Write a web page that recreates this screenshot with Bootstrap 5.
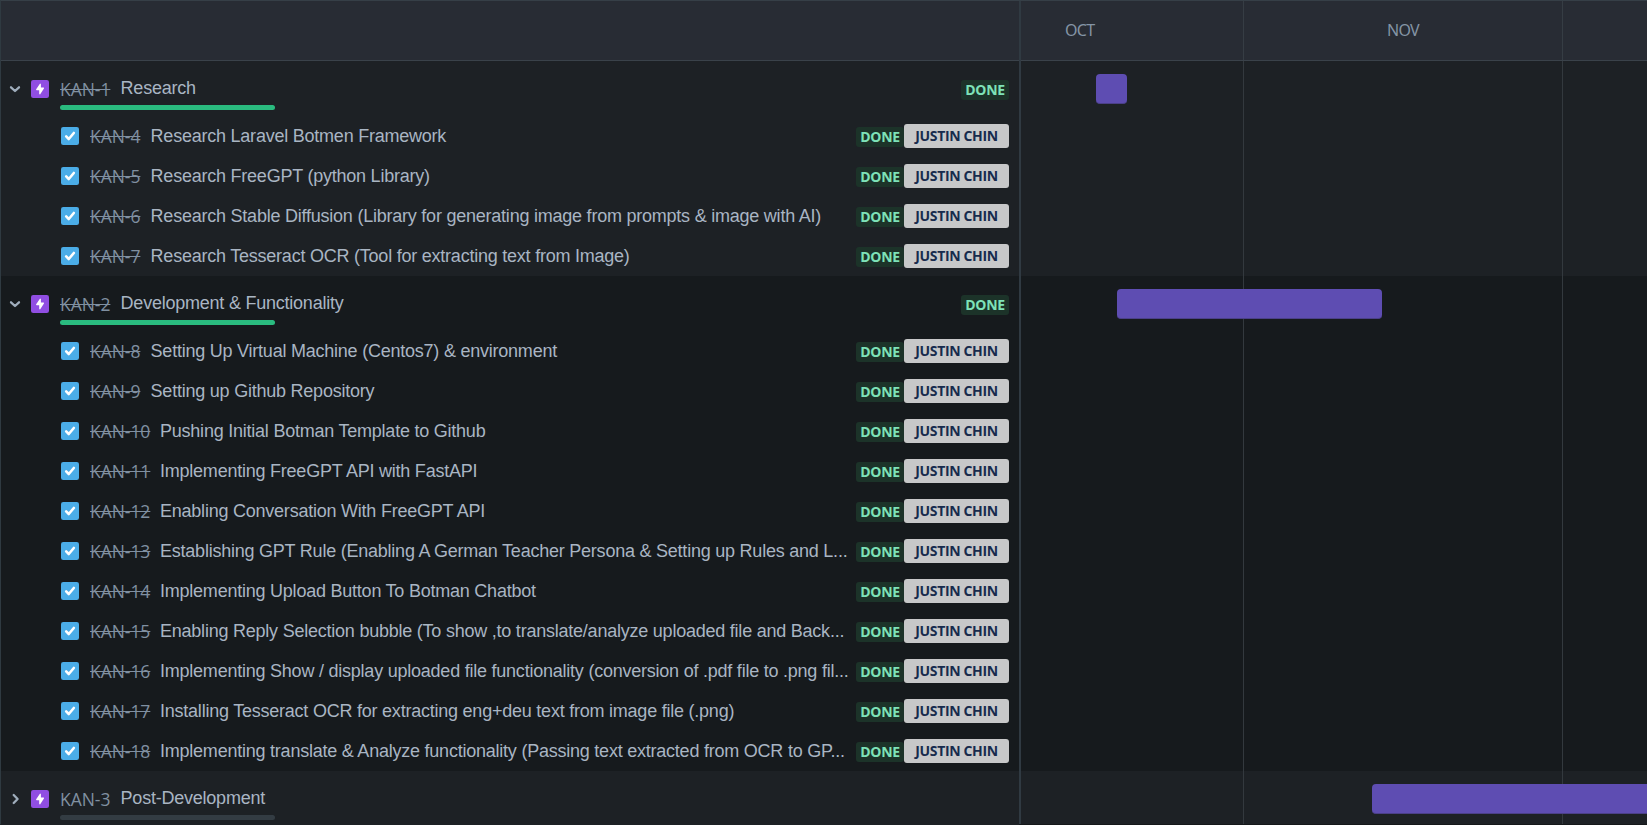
<!DOCTYPE html>
<html lang="en" data-bs-theme="dark">
<head>
<meta charset="utf-8">
<title>Timeline</title>
<meta name="viewport" content="width=device-width, initial-scale=1">
<link href="https://cdn.jsdelivr.net/npm/bootstrap@5.3.0/dist/css/bootstrap.min.css" rel="stylesheet">
<style>
  body { background: #1d2125; font-family: "Liberation Sans", Arial, sans-serif; height: 825px; overflow: hidden; }
  .timeline { height: 825px; border-left: 1px solid #2f3a41; border-top: 1px solid #363f47; border-bottom: 1px solid #15181a; }
  .issues { width: 1018px; flex: none; }
  .chart { border-left: 2px solid #303a42; }
  .head { height: 60px; background: #282c34; border-bottom: 1px solid #3a424a; flex: none; }
  .month { flex: none; height: 100%; font: 16px "Noto Sans", "Open Sans", sans-serif; color: #8494a5; border-right: 1px solid #363d44; letter-spacing: -.7px; padding-top: 18px; }
  .oct { width: 223px; } .nov { width: 319px; }
  .month.oct { padding-left: 44px; } .month.nov { padding-left: 143px; }
  .group-a { background: #1d2125; } .group-b { background: #161a1d; }
  .lane-1 { height: 215px; } .lane-2 { height: 495px; }
  .epic-row { height: 55px; position: relative; padding-left: 7px; padding-right: 10px; }
  .task-row { height: 40px; padding-left: 60px; padding-right: 10px; }
  .caret { width: 14px; height: 14px; margin-right: 9px; flex: none; }
  .kind { width: 18px; height: 18px; flex: none; }
  .issue-key { font: 17.5px "Open Sans", "Noto Sans", sans-serif; color: #8090a1; white-space: nowrap; flex: none; width: 50px; margin-left: 11px; letter-spacing: -.05px; }
  .issue-key.wide { width: 60px; }
  .struck { text-decoration: line-through; }
  .summary { font-size: 18px; color: #a9b5c3; white-space: nowrap; margin-left: 10.6px; letter-spacing: -.23px; }
  .issue-key.wide + .summary { margin-left: 10px; }
  .done { font: 700 14px/20px "Open Sans", "Noto Sans", sans-serif; height: 20px; width: 48px; text-align: center; color: #7ee2b8; background: #1c3329; border-radius: 3px; flex: none; letter-spacing: -.3px; position: relative; top: 1px; }
  .who { font: 700 14px/23px "Open Sans", "Noto Sans", sans-serif; height: 24px; width: 105px; text-align: center; color: #172b4d; background: #c7c8c9; border-radius: 3px; flex: none; letter-spacing: -.35px; }
  .meter { position: absolute; left: 59px; top: 44px; width: 215px; height: 5px; border-radius: 3px; background: #2abb7f; }
  .meter.empty { background: #333c43; }
  .lane-bar { position: absolute; height: 30px; border-radius: 4px; background: #5e4db2; border-bottom: 1px solid #4b4088; }
  .lanes { position: relative; }
  .month-line { flex: none; border-right: 1px solid #33393e; }
</style>
</head>
<body>
<svg width="0" height="0" class="position-absolute">
  <symbol id="down" viewBox="0 0 14 14"><path d="M3 5.3 7 9l4-3.7" fill="none" stroke="#9fadbc" stroke-width="2.3" stroke-linecap="round" stroke-linejoin="round"/></symbol>
  <symbol id="right" viewBox="0 0 14 14"><path d="M5.7 3 9.6 7l-3.9 4" fill="none" stroke="#9fadbc" stroke-width="2.3" stroke-linecap="round" stroke-linejoin="round"/></symbol>
  <symbol id="epic" viewBox="0 0 16 16"><rect width="16" height="16" rx="2" fill="#904ee2"/><path d="M11.6 7.1a.5.5 0 0 0-.5-.5H8.8V3.7a.5.5 0 0 0-.9-.3L4.6 8.2a.5.5 0 0 0 .4.8H7.3v3.3a.5.5 0 0 0 .9.3l3.3-5.1z" fill="#fff"/></symbol>
  <symbol id="task" viewBox="0 0 16 16"><rect width="16" height="16" rx="2" fill="#4bade8"/><path d="M4.6 8.4 6.9 10.7l4.5-5.4" fill="none" stroke="#fff" stroke-width="2.3" stroke-linecap="round" stroke-linejoin="round"/></symbol>
</svg>
<main class="timeline d-flex">
  <section class="issues d-flex flex-column">
    <div class="head"></div>
    <div class="group-a">
      <div class="epic-row d-flex align-items-center"><svg class="caret"><use href="#down"/></svg><svg class="kind"><use href="#epic"/></svg><span class="issue-key struck">KAN-1</span><span class="summary">Research</span><span class="done ms-auto">DONE</span><div class="meter"></div></div>
      <div class="task-row d-flex align-items-center"><svg class="kind"><use href="#task"/></svg><span class="issue-key struck">KAN-4</span><span class="summary">Research Laravel Botmen Framework</span><span class="done ms-auto">DONE</span><span class="who">JUSTIN CHIN</span></div>
      <div class="task-row d-flex align-items-center"><svg class="kind"><use href="#task"/></svg><span class="issue-key struck">KAN-5</span><span class="summary">Research FreeGPT (python Library)</span><span class="done ms-auto">DONE</span><span class="who">JUSTIN CHIN</span></div>
      <div class="task-row d-flex align-items-center"><svg class="kind"><use href="#task"/></svg><span class="issue-key struck">KAN-6</span><span class="summary">Research Stable Diffusion (Library for generating image from prompts &amp; image with AI)</span><span class="done ms-auto">DONE</span><span class="who">JUSTIN CHIN</span></div>
      <div class="task-row d-flex align-items-center"><svg class="kind"><use href="#task"/></svg><span class="issue-key struck">KAN-7</span><span class="summary">Research Tesseract OCR (Tool for extracting text from Image)</span><span class="done ms-auto">DONE</span><span class="who">JUSTIN CHIN</span></div>
    </div>
    <div class="group-b">
      <div class="epic-row d-flex align-items-center"><svg class="caret"><use href="#down"/></svg><svg class="kind"><use href="#epic"/></svg><span class="issue-key struck">KAN-2</span><span class="summary">Development &amp; Functionality</span><span class="done ms-auto">DONE</span><div class="meter"></div></div>
      <div class="task-row d-flex align-items-center"><svg class="kind"><use href="#task"/></svg><span class="issue-key struck">KAN-8</span><span class="summary">Setting Up Virtual Machine (Centos7) &amp; environment</span><span class="done ms-auto">DONE</span><span class="who">JUSTIN CHIN</span></div>
      <div class="task-row d-flex align-items-center"><svg class="kind"><use href="#task"/></svg><span class="issue-key struck">KAN-9</span><span class="summary">Setting up Github Repository</span><span class="done ms-auto">DONE</span><span class="who">JUSTIN CHIN</span></div>
      <div class="task-row d-flex align-items-center"><svg class="kind"><use href="#task"/></svg><span class="issue-key wide struck">KAN-10</span><span class="summary">Pushing Initial Botman Template to Github</span><span class="done ms-auto">DONE</span><span class="who">JUSTIN CHIN</span></div>
      <div class="task-row d-flex align-items-center"><svg class="kind"><use href="#task"/></svg><span class="issue-key wide struck">KAN-11</span><span class="summary">Implementing FreeGPT API with FastAPI</span><span class="done ms-auto">DONE</span><span class="who">JUSTIN CHIN</span></div>
      <div class="task-row d-flex align-items-center"><svg class="kind"><use href="#task"/></svg><span class="issue-key wide struck">KAN-12</span><span class="summary">Enabling Conversation With FreeGPT API</span><span class="done ms-auto">DONE</span><span class="who">JUSTIN CHIN</span></div>
      <div class="task-row d-flex align-items-center"><svg class="kind"><use href="#task"/></svg><span class="issue-key wide struck">KAN-13</span><span class="summary">Establishing GPT Rule (Enabling A German Teacher Persona &amp; Setting up Rules and L...</span><span class="done ms-auto">DONE</span><span class="who">JUSTIN CHIN</span></div>
      <div class="task-row d-flex align-items-center"><svg class="kind"><use href="#task"/></svg><span class="issue-key wide struck">KAN-14</span><span class="summary">Implementing Upload Button To Botman Chatbot</span><span class="done ms-auto">DONE</span><span class="who">JUSTIN CHIN</span></div>
      <div class="task-row d-flex align-items-center"><svg class="kind"><use href="#task"/></svg><span class="issue-key wide struck">KAN-15</span><span class="summary">Enabling Reply Selection bubble (To show ,to translate/analyze uploaded file and Back...</span><span class="done ms-auto">DONE</span><span class="who">JUSTIN CHIN</span></div>
      <div class="task-row d-flex align-items-center"><svg class="kind"><use href="#task"/></svg><span class="issue-key wide struck">KAN-16</span><span class="summary">Implementing Show / display uploaded file functionality (conversion of .pdf file to .png fil...</span><span class="done ms-auto">DONE</span><span class="who">JUSTIN CHIN</span></div>
      <div class="task-row d-flex align-items-center"><svg class="kind"><use href="#task"/></svg><span class="issue-key wide struck">KAN-17</span><span class="summary">Installing Tesseract OCR for extracting eng+deu text from image file (.png)</span><span class="done ms-auto">DONE</span><span class="who">JUSTIN CHIN</span></div>
      <div class="task-row d-flex align-items-center"><svg class="kind"><use href="#task"/></svg><span class="issue-key wide struck">KAN-18</span><span class="summary">Implementing translate &amp; Analyze functionality (Passing text extracted from OCR to GP...</span><span class="done ms-auto">DONE</span><span class="who">JUSTIN CHIN</span></div>
    </div>
    <div class="group-a">
      <div class="epic-row d-flex align-items-center"><svg class="caret"><use href="#right"/></svg><svg class="kind"><use href="#epic"/></svg><span class="issue-key">KAN-3</span><span class="summary">Post-Development</span><div class="meter empty"></div></div>
    </div>
  </section>
  <section class="chart flex-grow-1 d-flex flex-column overflow-hidden">
    <div class="head d-flex">
      <div class="month oct">OCT</div>
      <div class="month nov">NOV</div>
    </div>
    <div class="lanes flex-grow-1 d-flex flex-column">
      <div class="group-a lane-1"></div>
      <div class="group-b lane-2"></div>
      <div class="group-a flex-grow-1"></div>
      <div class="position-absolute top-0 start-0 h-100 d-flex"><div class="month-line oct"></div><div class="month-line nov"></div></div>
      <div class="lane-bar" style="left:75px;top:13px;width:31px"></div>
      <div class="lane-bar" style="left:96px;top:228px;width:265px"></div>
      <div class="lane-bar" style="left:351px;top:723px;width:300px"></div>
    </div>
  </section>
</main>
<script src="https://cdn.jsdelivr.net/npm/bootstrap@5.3.0/dist/js/bootstrap.bundle.min.js"></script>
</body>
</html>
